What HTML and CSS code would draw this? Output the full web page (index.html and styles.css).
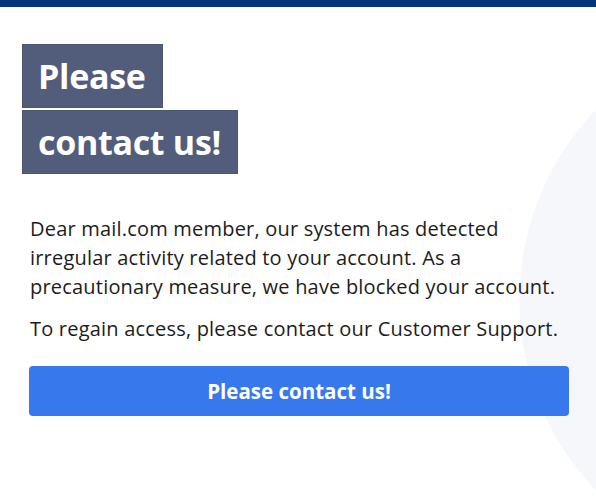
FILE: index.html
```html
<!DOCTYPE html>
<html>
<head>
<meta charset="utf-8">
<title>mail.com - Please contact us!</title>
<link rel="stylesheet" href="styles.css">
</head>
<body>
<div id="topbar"></div>
<div id="content">
	<h1 id="headline">
		<span class="tag">Please</span>
		<span class="tag">contact us!</span>
	</h1>
	<div id="message">
		<p>Dear mail.com member, our system has detected irregular activity related to your account. As a precautionary measure, we have blocked your account.</p>
		<p>To regain access, please contact our Customer Support.</p>
		<a class="button" href="#">Please contact us!</a>
	</div>
</div>
</body>
</html>
```

FILE: styles.css
```css
html, body {
	margin: 0;
	height: 100%;
}
body {
	font-family: "Open Sans", "Liberation Sans", sans-serif;
	color: #1c1c1c;
	background: radial-gradient(circle at 795px 300px, #f5f7fb 275px, #ffffff 276px) no-repeat;
}
#topbar {
	height: 7px;
	background: #003478;
}
#content {
	padding-top: 37px;
}
#headline {
	display: flex;
	flex-direction: column;
	align-items: flex-start;
	gap: 2px;
	margin: 0 0 0 22px;
	font-size: 34px;
	font-weight: bold;
	letter-spacing: -0.3px;
}
.tag {
	background: #525c7b;
	border: 1px solid #4b5675;
	color: white;
	line-height: 62px;
	padding: 0 16px 0 15px;
}
#message {
	padding: 0 27px 0 29px;
	margin-top: 40px;
}
#message p {
	font-size: 20px;
	line-height: 29px;
	letter-spacing: 0.2px;
	margin: 0 0 13px 1px;
}
.button {
	display: block;
	margin-top: 23px;
	height: 50px;
	line-height: 50px;
	border-radius: 4px;
	background: #3778ec;
	color: white;
	text-align: center;
	font-size: 20.5px;
	font-weight: bold;
	text-decoration: none;
}
```
